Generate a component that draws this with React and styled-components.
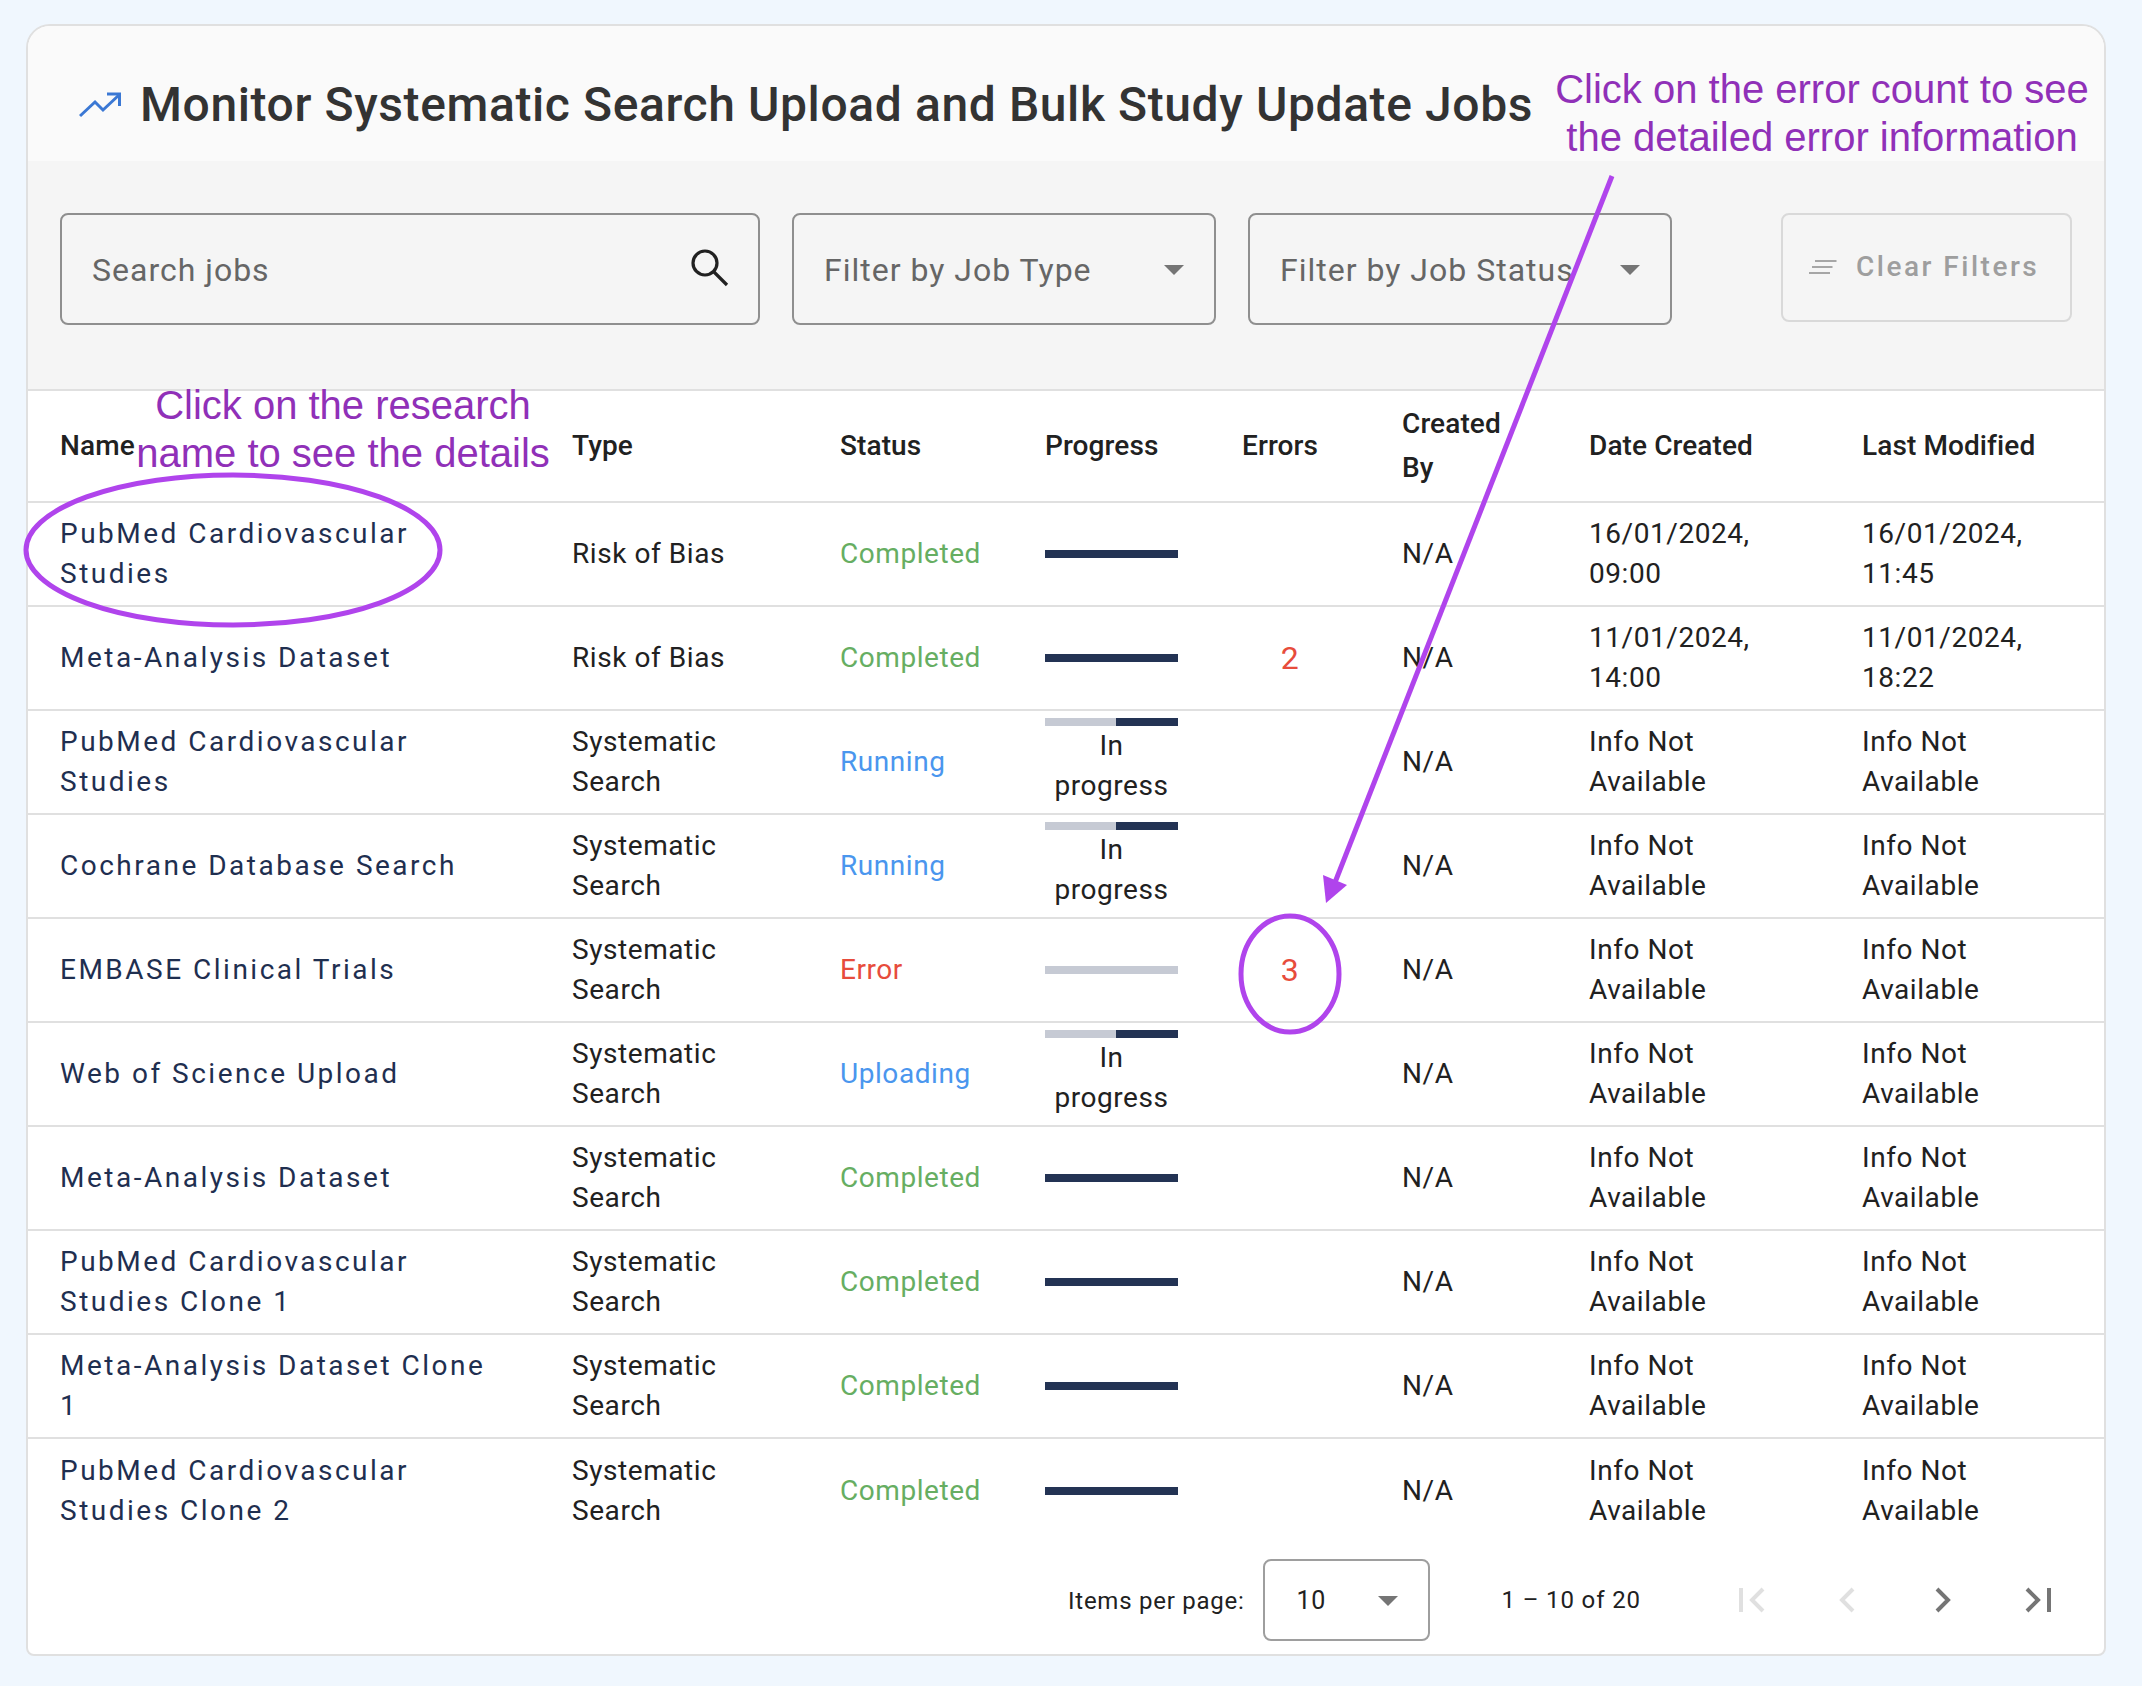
import React from "react";
import styled, { createGlobalStyle } from "styled-components";

const GlobalStyle = createGlobalStyle`
  html, body {
    margin: 0;
    padding: 0;
    background: #f0f7fe;
    font-family: Roboto, "Liberation Sans", sans-serif;
  }
`;

const Page = styled.div`
  position: relative;
  width: 2142px;
  height: 1686px;
  box-sizing: border-box;
  padding: 24px 36px 30px 26px;
`;

const Card = styled.div`
  box-sizing: border-box;
  height: 1632px;
  background: #ffffff;
  border: 2px solid #e0e0e0;
  border-radius: 24px 24px 8px 8px;
  overflow: hidden;
`;

const Header = styled.div`
  height: 135px;
  box-sizing: border-box;
  background: #fafafa;
  display: flex;
  align-items: center;
  gap: 19px;
  padding: 22px 0 0 51px;
`;

const Title = styled.h1`
  margin: 0;
  font-size: 48px;
  font-weight: 500;
  letter-spacing: 0.6px;
  color: #333333;
  white-space: nowrap;
`;

const Filters = styled.div`
  height: 230px;
  box-sizing: border-box;
  background: #f5f5f5;
  border-bottom: 2px solid #e0e0e0;
  display: flex;
  align-items: flex-start;
  gap: 32px;
  padding: 52px 32px 0 32px;
`;

const Field = styled.div`
  width: ${(p) => p.$width}px;
  height: 112px;
  box-sizing: border-box;
  border: 2px solid #8f8f8f;
  border-radius: 8px;
  display: flex;
  align-items: center;
  justify-content: space-between;
  padding: 2px 30px 0;
  font-size: 32px;
  letter-spacing: 1px;
  color: #666666;
`;

const SearchSlot = styled.span`
  display: flex;
  margin: -3px -6px 0 0;
`;

const Arrow = styled.span`
  width: 0;
  height: 0;
  border-left: 10px solid transparent;
  border-right: 10px solid transparent;
  border-top: 10px solid #757575;
`;

const ClearButton = styled.div`
  margin-left: auto;
  width: 291px;
  height: 109px;
  box-sizing: border-box;
  border: 2px solid #d9d9d9;
  border-radius: 8px;
  display: flex;
  align-items: center;
  gap: 19px;
  padding: 0 0 2px 26px;
  font-size: 28px;
  font-weight: 500;
  letter-spacing: 2.5px;
  color: #9e9e9e;
`;

const Table = styled.table`
  width: 100%;
  table-layout: fixed;
  border-collapse: separate;
  border-spacing: 0;
`;

const Th = styled.th`
  height: 112px;
  box-sizing: border-box;
  padding: 0 64px 0 0;
  border-bottom: 2px solid #e0e0e0;
  text-align: left;
  font-size: 28px;
  font-weight: 500;
  line-height: 44px;
  letter-spacing: 0.1px;
  color: #212121;
  &:first-child {
    padding-left: 32px;
  }
`;

const Td = styled.td`
  height: 104px;
  box-sizing: border-box;
  padding: 0 ${(p) => p.$right ?? 64}px 0 0;
  border-bottom: ${(p) => (p.$last ? "none" : "2px solid #e0e0e0")};
  font-size: 28px;
  line-height: 40px;
  letter-spacing: 0.56px;
  color: #212121;
`;

const NameCell = styled(Td)`
  padding-left: 32px;
  letter-spacing: 2.5px;
  color: #1f2f50;
`;

const StatusText = styled.span`
  color: ${(p) => p.$color};
`;

const ErrorCount = styled.div`
  width: 96px;
  text-align: center;
  font-size: 32px;
  color: #e74c3c;
`;

const ProgressWrap = styled.div`
  width: 133px;
  text-align: center;
`;

const Bar = styled.div`
  height: 8px;
  background: #c6cad4;
`;

const BarFill = styled.div`
  height: 100%;
  margin-left: auto;
  background: #233354;
`;

const Paginator = styled.div`
  height: 113px;
  display: flex;
  align-items: center;
  font-size: 24px;
  letter-spacing: 0.75px;
  color: #212121;
  padding: 0 0 4px 1040px;
`;

const PageLabel = styled.span`
  padding-top: 3px;
`;

const PageSize = styled.div`
  width: 167px;
  height: 82px;
  box-sizing: border-box;
  margin: 0 72px 0 18px;
  border: 2px solid #9e9e9e;
  border-radius: 8px;
  display: flex;
  align-items: center;
  justify-content: space-between;
  padding: 2px 30px 0 32px;
  font-size: 25px;
  letter-spacing: 0.6px;
`;

const PageRange = styled.span`
  letter-spacing: 0.85px;
`;

const PageButtons = styled.div`
  display: flex;
  margin-left: 86px;
  gap: 48px;
`;

const PageIcon = styled.svg`
  width: 48px;
  height: 48px;
  color: ${(p) => (p.$off ? "#e0e0e0" : "#757575")};
`;

const Overlay = styled.svg`
  position: absolute;
  inset: 0;
  pointer-events: none;
`;

const Note = styled.div`
  position: absolute;
  left: ${(p) => p.$left}px;
  top: ${(p) => p.$top}px;
  width: 600px;
  text-align: center;
  font-family: "Liberation Sans", Arial, sans-serif;
  font-size: 40px;
  line-height: 48px;
  color: #9030b8;
  white-space: nowrap;
`;

const columns = [
  { label: "Name", width: 544 },
  { label: "Type", width: 268 },
  { label: "Status", width: 205 },
  { label: "Progress", width: 197 },
  { label: "Errors", width: 160 },
  { label: "Created By", width: 187 },
  { label: "Date Created", width: 273 },
  { label: "Last Modified", width: 243 },
];

const green = "#66ae62";
const blue = "#4a96ee";
const red = "#e74c3c";
const noInfo = "Info Not Available";

const rows = [
  { name: "PubMed Cardiovascular Studies", type: "Risk of Bias", status: "Completed", color: green, progress: 100, created: "16/01/2024, 09:00", modified: "16/01/2024, 11:45" },
  { name: "Meta-Analysis Dataset", type: "Risk of Bias", status: "Completed", color: green, progress: 100, errors: 2, created: "11/01/2024, 14:00", modified: "11/01/2024, 18:22" },
  { name: "PubMed Cardiovascular Studies", type: "Systematic Search", status: "Running", color: blue, progress: 47, label: true, created: noInfo, modified: noInfo },
  { name: "Cochrane Database Search", type: "Systematic Search", status: "Running", color: blue, progress: 47, label: true, created: noInfo, modified: noInfo },
  { name: "EMBASE Clinical Trials", type: "Systematic Search", status: "Error", color: red, progress: 0, errors: 3, created: noInfo, modified: noInfo },
  { name: "Web of Science Upload", type: "Systematic Search", status: "Uploading", color: blue, progress: 47, label: true, created: noInfo, modified: noInfo },
  { name: "Meta-Analysis Dataset", type: "Systematic Search", status: "Completed", color: green, progress: 100, created: noInfo, modified: noInfo },
  { name: "PubMed Cardiovascular Studies Clone 1", type: "Systematic Search", status: "Completed", color: green, progress: 100, created: noInfo, modified: noInfo },
  { name: "Meta-Analysis Dataset Clone 1", type: "Systematic Search", status: "Completed", color: green, progress: 100, created: noInfo, modified: noInfo },
  { name: "PubMed Cardiovascular Studies Clone 2", type: "Systematic Search", status: "Completed", color: green, progress: 100, created: noInfo, modified: noInfo },
];

const Progress = ({ value, label }) => (
  <ProgressWrap>
    <Bar>
      <BarFill style={{ width: `${value}%` }} />
    </Bar>
    {label && "In progress"}
  </ProgressWrap>
);

const TrendIcon = () => (
  <svg width="42" height="26" viewBox="0 0 42 26" fill="none" stroke="#3b78d4" strokeWidth="3">
    <path d="M1 24L16 10L24 18L40 3" />
    <path d="M28 2H40.5V14" />
  </svg>
);

const SearchIcon = () => (
  <svg width="44" height="44" viewBox="0 0 44 44" fill="none" stroke="#212121" strokeWidth="3.2">
    <circle cx="15" cy="16" r="12" />
    <path d="M24 25L37 38" />
  </svg>
);

const ClearIcon = () => (
  <svg width="28" height="16" viewBox="0 0 28 16" fill="none" stroke="#a6a6a6" strokeWidth="2">
    <path d="M6 2H27.5M3 8H23.5M0 14H21" />
  </svg>
);

const pageIcons = [
  { off: true, d: "M36 13L25 24L36 35M14 12V36" },
  { off: true, d: "M30 13L19 24L30 35" },
  { off: false, d: "M18 13L29 24L18 35" },
  { off: false, d: "M12 13L23 24L12 35M34 12V36" },
];

const App = () => {
  return (
    <Page>
      <GlobalStyle />
      <Card>
        <Header>
          <TrendIcon />
          <Title>Monitor Systematic Search Upload and Bulk Study Update Jobs</Title>
        </Header>
        <Filters>
          <Field $width={700}>
            <span>Search jobs</span>
            <SearchSlot>
              <SearchIcon />
            </SearchSlot>
          </Field>
          <Field $width={424}>
            <span>Filter by Job Type</span>
            <Arrow />
          </Field>
          <Field $width={424}>
            <span>Filter by Job Status</span>
            <Arrow />
          </Field>
          <ClearButton>
            <ClearIcon />
            Clear Filters
          </ClearButton>
        </Filters>
        <Table>
          <colgroup>
            {columns.map((c) => (
              <col key={c.label} style={{ width: c.width }} />
            ))}
          </colgroup>
          <thead>
            <tr>
              {columns.map((c) => (
                <Th key={c.label}>{c.label}</Th>
              ))}
            </tr>
          </thead>
          <tbody>
            {rows.map((r, i) => {
              const last = i === rows.length - 1;
              return (
                <tr key={i}>
                  <NameCell $last={last} $right={80}>{r.name}</NameCell>
                  <Td $last={last}>{r.type}</Td>
                  <Td $last={last}><StatusText $color={r.color}>{r.status}</StatusText></Td>
                  <Td $last={last} $right={0}><Progress value={r.progress} label={r.label} /></Td>
                  <Td $last={last} $right={0}>{r.errors && <ErrorCount>{r.errors}</ErrorCount>}</Td>
                  <Td $last={last}>N/A</Td>
                  <Td $last={last}>{r.created}</Td>
                  <Td $last={last}>{r.modified}</Td>
                </tr>
              );
            })}
          </tbody>
        </Table>
        <Paginator>
          <PageLabel>Items per page:</PageLabel>
          <PageSize>
            <span>10</span>
            <Arrow />
          </PageSize>
          <PageRange>1 – 10 of 20</PageRange>
          <PageButtons>
            {pageIcons.map((p, i) => (
              <PageIcon key={i} $off={p.off} viewBox="0 0 48 48" fill="none" stroke="currentColor" strokeWidth="4">
                <path d={p.d} />
              </PageIcon>
            ))}
          </PageButtons>
        </Paginator>
      </Card>

      <Overlay width="2142" height="1686" viewBox="0 0 2142 1686" fill="none" stroke="#b044ec" strokeWidth="5">
        <ellipse cx="233" cy="550" rx="207" ry="75" />
        <ellipse cx="1290" cy="974" rx="49" ry="58" />
        <path d="M1612 176L1334 885" />
        <path d="M1326 903L1323 875L1347 885Z" fill="#b044ec" stroke="none" />
      </Overlay>
      <Note $left={43} $top={381}>Click on the research<br />name to see the details</Note>
      <Note $left={1522} $top={65}>Click on the error count to see<br />the detailed error information</Note>
    </Page>
  );
};

export default App;
